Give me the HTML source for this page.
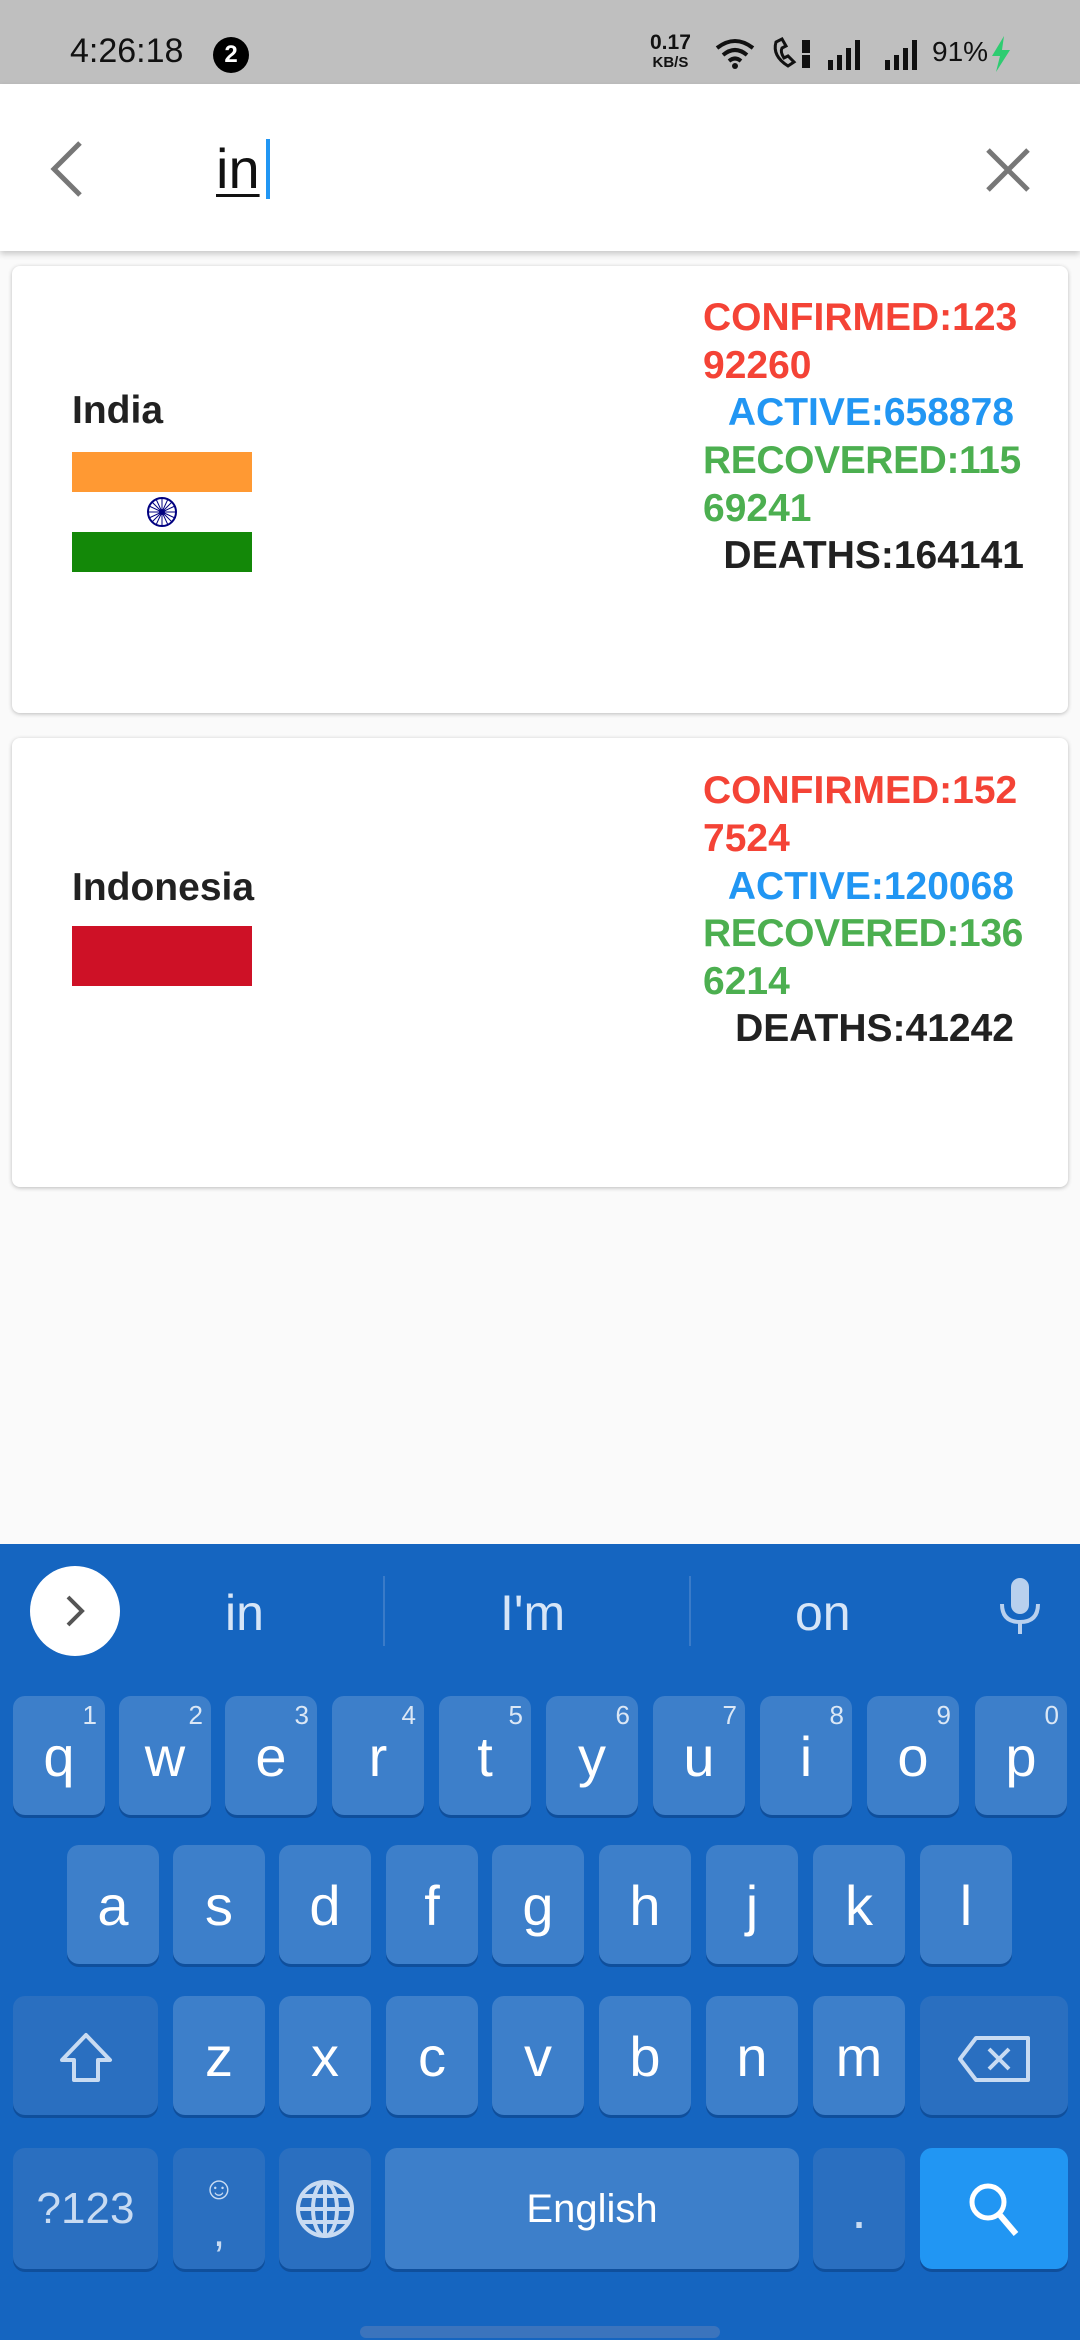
<!DOCTYPE html>
<html><head><meta charset="utf-8"><style>
*{margin:0;padding:0;box-sizing:border-box}
body{width:1080px;height:2340px;background:#fafafa;font-family:"Liberation Sans",sans-serif;position:relative;overflow:hidden}
.abs{position:absolute}
.sb{left:0;top:0;width:1080px;height:84px;background:#bfbfbf}
.bar{left:0;top:84px;width:1080px;height:167px;background:#fff;box-shadow:0 3px 6px rgba(0,0,0,.2)}
.card{left:12px;width:1056px;background:#fff;border-radius:8px;box-shadow:0 1px 4px rgba(0,0,0,.25)}
.st{font-weight:bold;font-size:39px;line-height:48px;white-space:nowrap}
.red{color:#f44336}.blue{color:#2196f3}.green{color:#4caf50}.blk{color:#212121}
.name{font-weight:bold;font-size:39px;color:#212121}
.kb{left:0;top:1544px;width:1080px;height:796px;background:#1565c0}
.k{position:absolute;height:119px;background:#3d7fca;border-radius:12px;box-shadow:0 3px 0 #0f4f9c;color:#fff;font-size:56px;text-align:center;line-height:122px}
.k sup{position:absolute;right:8px;top:-42px;font-size:26px;color:#dbe7f5}
.sug{color:#d6e5f7;font-size:50px;top:1584px}
</style></head><body>
<div class="abs sb">
 <div class="abs" style="left:70px;top:32px;font-size:34px;color:#111">4:26:18</div>
 <div class="abs" style="left:213px;top:37px;width:36px;height:36px;border-radius:50%;background:#000;color:#fff;font-size:24px;font-weight:bold;text-align:center;line-height:36px">2</div>
 <div class="abs" style="left:650px;top:34px;font-size:21px;font-weight:bold;line-height:18px;text-align:center;color:#111">0.17<br><span style="font-size:15px">KB/S</span></div>
 <svg class="abs" style="left:715px;top:38px" width="40" height="32" viewBox="0 0 40 32"><path d="M2 10 Q20 -4 38 10" stroke="#111" stroke-width="4" fill="none"/><path d="M8 17 Q20 7 32 17" stroke="#111" stroke-width="4" fill="none"/><path d="M14 23 Q20 18 26 23" stroke="#111" stroke-width="4" fill="none"/><circle cx="20" cy="28" r="3" fill="#111"/></svg>
 <svg class="abs" style="left:770px;top:36px" width="44" height="36" viewBox="0 0 44 36"><path d="M6 6 Q2 20 18 30 L24 26 L18 20 L14 22 Q10 16 12 12 L16 10 L12 3Z" fill="none" stroke="#111" stroke-width="3"/><rect x="32" y="4" width="8" height="13" fill="#111"/><rect x="32" y="19" width="8" height="13" fill="#111"/></svg>
 <svg class="abs" style="left:828px;top:40px" width="36" height="30"><rect x="0" y="20" width="5" height="10" fill="#111"/><rect x="9" y="15" width="5" height="15" fill="#111"/><rect x="18" y="8" width="5" height="22" fill="#111"/><rect x="27" y="0" width="5" height="30" fill="#111"/></svg>
 <svg class="abs" style="left:885px;top:40px" width="36" height="30"><rect x="0" y="20" width="5" height="10" fill="#111"/><rect x="9" y="15" width="5" height="15" fill="#111"/><rect x="18" y="8" width="5" height="22" fill="#111"/><rect x="27" y="0" width="5" height="30" fill="#111"/></svg>
 <div class="abs" style="left:932px;top:36px;font-size:28px;color:#111">91%</div>
 <svg class="abs" style="left:990px;top:36px" width="22" height="36"><path d="M14 0 L2 20 L10 20 L6 36 L20 14 L12 14Z" fill="#2ecc71"/></svg>
</div>
<div class="abs bar">
 <svg class="abs" style="left:46px;top:56px" width="40" height="58"><path d="M34 3 L8 29 L34 55" stroke="#777" stroke-width="5" fill="none"/></svg>
 <div class="abs" style="left:216px;top:52px;font-size:56px;color:#111;text-decoration:underline;text-decoration-thickness:3px;text-underline-offset:6px">in</div>
 <svg class="abs" style="left:984px;top:62px" width="48" height="48"><path d="M4 4 L44 44 M44 4 L4 44" stroke="#777" stroke-width="5"/></svg>
</div>
<div class="abs" style="left:266px;top:139px;width:4px;height:60px;background:#2196f3"></div>

<div class="abs card" style="top:266px;height:447px">
 <div class="abs name" style="left:60px;top:123px">India</div>
 <div class="abs" style="left:60px;top:186px;width:180px;height:40px;background:#ff9933"></div>
 <div class="abs" style="left:60px;top:226px;width:180px;height:40px;background:#fff"></div>
 <div class="abs" style="left:60px;top:266px;width:180px;height:40px;background:#138808"></div>
 <svg class="abs" style="left:134px;top:230px" width="32" height="32" viewBox="0 0 32 32"><circle cx="16" cy="16" r="14" fill="none" stroke="#000080" stroke-width="2"/><circle cx="16" cy="16" r="3" fill="#000080"/><g stroke="#000080" stroke-width="1"><path d="M16 2V30M2 16H30M6 6L26 26M26 6L6 26M10 3L22 29M22 3L10 29M3 10L29 22M3 22L29 10"/></g></svg>
 <div class="abs st red" style="left:691px;top:28px">CONFIRMED:123</div>
 <div class="abs st red" style="left:691px;top:76px">92260</div>
 <div class="abs st blue" style="right:54px;top:123px">ACTIVE:658878</div>
 <div class="abs st green" style="left:691px;top:171px;letter-spacing:-0.4px">RECOVERED:115</div>
 <div class="abs st green" style="left:691px;top:219px">69241</div>
 <div class="abs st blk" style="right:44px;top:266px">DEATHS:164141</div>
</div>

<div class="abs card" style="top:738px;height:449px">
 <div class="abs name" style="left:60px;top:128px">Indonesia</div>
 <div class="abs" style="left:60px;top:188px;width:180px;height:60px;background:#ce1126"></div>
 <div class="abs st red" style="left:691px;top:29px">CONFIRMED:152</div>
 <div class="abs st red" style="left:691px;top:77px">7524</div>
 <div class="abs st blue" style="right:54px;top:125px">ACTIVE:120068</div>
 <div class="abs st green" style="left:691px;top:172px;letter-spacing:-0.4px">RECOVERED:136</div>
 <div class="abs st green" style="left:691px;top:220px">6214</div>
 <div class="abs st blk" style="right:54px;top:267px">DEATHS:41242</div>
</div>

<div class="abs kb"></div>
<div class="abs" style="left:30px;top:1566px;width:90px;height:90px;border-radius:50%;background:#fff"></div>
<svg class="abs" style="left:60px;top:1593px" width="30" height="36"><path d="M8 4 L22 18 L8 32" stroke="#555" stroke-width="4" fill="none"/></svg>
<div class="abs sug" style="left:225px">in</div>
<div class="abs sug" style="left:500px">I'm</div>
<div class="abs sug" style="left:795px">on</div>
<div class="abs" style="left:383px;top:1576px;width:2px;height:70px;background:#3a7bc8"></div>
<div class="abs" style="left:689px;top:1576px;width:2px;height:70px;background:#3a7bc8"></div>
<svg class="abs" style="left:998px;top:1578px" width="44" height="60"><rect x="13" y="0" width="18" height="36" rx="9" fill="#b8d0ee"/><path d="M4 26 Q4 44 22 44 Q40 44 40 26" stroke="#b8d0ee" stroke-width="4" fill="none"/><rect x="20" y="44" width="4" height="12" fill="#b8d0ee"/></svg>

<div class="k" style="left:13px;top:1696px;width:92px">q<sup>1</sup></div>
<div class="k" style="left:119px;top:1696px;width:92px">w<sup>2</sup></div>
<div class="k" style="left:225px;top:1696px;width:92px">e<sup>3</sup></div>
<div class="k" style="left:332px;top:1696px;width:92px">r<sup>4</sup></div>
<div class="k" style="left:439px;top:1696px;width:92px">t<sup>5</sup></div>
<div class="k" style="left:546px;top:1696px;width:92px">y<sup>6</sup></div>
<div class="k" style="left:653px;top:1696px;width:92px">u<sup>7</sup></div>
<div class="k" style="left:760px;top:1696px;width:92px">i<sup>8</sup></div>
<div class="k" style="left:867px;top:1696px;width:92px">o<sup>9</sup></div>
<div class="k" style="left:975px;top:1696px;width:92px">p<sup>0</sup></div>

<div class="k" style="left:67px;top:1845px;width:92px">a</div>
<div class="k" style="left:173px;top:1845px;width:92px">s</div>
<div class="k" style="left:279px;top:1845px;width:92px">d</div>
<div class="k" style="left:386px;top:1845px;width:92px">f</div>
<div class="k" style="left:492px;top:1845px;width:92px">g</div>
<div class="k" style="left:599px;top:1845px;width:92px">h</div>
<div class="k" style="left:706px;top:1845px;width:92px">j</div>
<div class="k" style="left:813px;top:1845px;width:92px">k</div>
<div class="k" style="left:920px;top:1845px;width:92px">l</div>

<div class="k" style="left:13px;top:1996px;width:145px;background:#2a6fc0"><svg style="margin-top:36px" width="56" height="52"><path d="M28 3 L52 28 L40 28 L40 48 L16 48 L16 28 L4 28Z" stroke="#c8dbf2" stroke-width="4" fill="none" stroke-linejoin="round"/></svg></div>
<div class="k" style="left:173px;top:1996px;width:92px">z</div>
<div class="k" style="left:279px;top:1996px;width:92px">x</div>
<div class="k" style="left:386px;top:1996px;width:92px">c</div>
<div class="k" style="left:492px;top:1996px;width:92px">v</div>
<div class="k" style="left:599px;top:1996px;width:92px">b</div>
<div class="k" style="left:706px;top:1996px;width:92px">n</div>
<div class="k" style="left:813px;top:1996px;width:92px">m</div>
<div class="k" style="left:920px;top:1996px;width:148px;background:#2a6fc0"><svg style="margin-top:38px" width="76" height="50"><path d="M20 4 L72 4 L72 46 L20 46 L4 25Z" stroke="#c8dbf2" stroke-width="4" fill="none" stroke-linejoin="round"/><path d="M33 15 L53 35 M53 15 L33 35" stroke="#c8dbf2" stroke-width="4"/></svg></div>

<div class="k" style="left:13px;top:2148px;width:145px;height:121px;background:#2a6fc0;font-size:44px;color:#c8dbf2">?123</div>
<div class="k" style="left:173px;top:2148px;width:92px;height:121px;background:#2a6fc0;color:#c8dbf2;font-size:44px;line-height:44px"><div style="font-size:32px;margin-top:18px">☺</div>,</div>
<div class="k" style="left:279px;top:2148px;width:92px;height:121px;background:#2a6fc0"><svg style="margin-top:30px" width="62" height="62" viewBox="0 0 62 62"><g stroke="#c8dbf2" stroke-width="4" fill="none"><circle cx="31" cy="31" r="27"/><ellipse cx="31" cy="31" rx="12" ry="27"/><path d="M4 31H58M8 18H54M8 44H54M31 4V58"/></g></svg></div>
<div class="k" style="left:385px;top:2148px;width:414px;height:121px;font-size:40px">English</div>
<div class="k" style="left:813px;top:2148px;width:92px;height:121px;background:#2a6fc0;color:#c8dbf2">.</div>
<div class="k" style="left:920px;top:2148px;width:148px;height:121px;background:#2196f3"><svg style="margin-top:32px" width="56" height="60"><circle cx="22" cy="22" r="16" stroke="#fff" stroke-width="5" fill="none"/><path d="M33 34 L50 54" stroke="#fff" stroke-width="6"/></svg></div>
<div class="abs" style="left:360px;top:2326px;width:360px;height:12px;border-radius:6px;background:#3b74bd"></div>
</body></html>
